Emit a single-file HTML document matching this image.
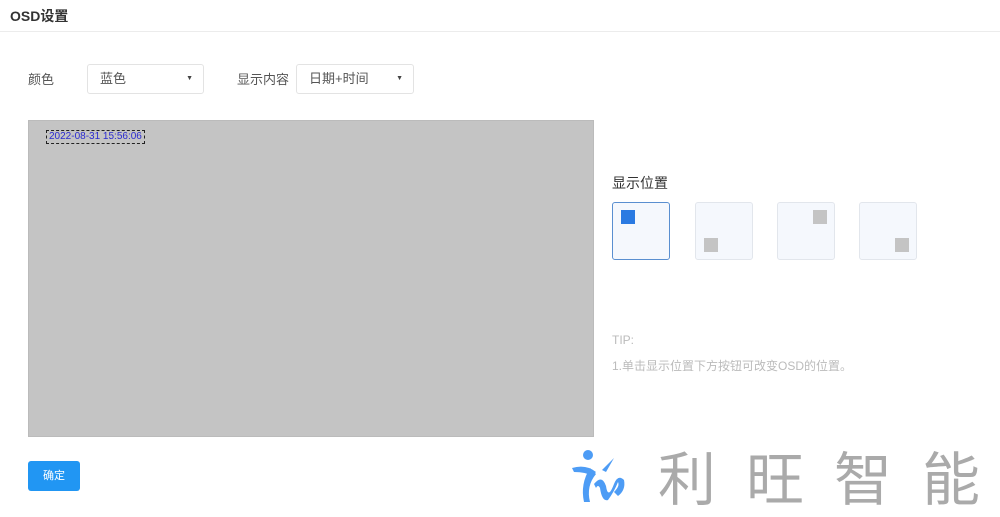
<!DOCTYPE html><html><head><meta charset="utf-8"><style>
body{margin:0;width:1000px;height:507px;background:#fff;font-family:"Liberation Sans","Noto Sans CJK SC",sans-serif;position:relative;overflow:hidden;color:#555}
.a{position:absolute}
.sel{position:absolute;height:30px;border:1px solid #e3e3e3;border-radius:3px;box-sizing:border-box;font-size:13px;color:#555;line-height:28px;padding-left:12px}
.sel:after{content:"▼";position:absolute;right:10px;top:0;font-size:7px;color:#444}
.box{position:absolute;top:202px;width:58px;height:58px;box-sizing:border-box;border:1px solid #e2e6ec;border-radius:3px;background:#f5f8fd}
.box i{position:absolute;width:14px;height:14px;background:#c4c4c4}
</style></head><body>
<div class="a" style="left:10px;top:6px;font-size:14px;font-weight:bold;color:#333">OSD设置</div>
<div class="a" style="left:0;top:31px;width:1000px;height:1px;background:#ececec"></div>
<div class="a" style="left:28px;top:69px;font-size:13px">颜色</div>
<div class="sel" style="left:87px;top:64px;width:117px">蓝色</div>
<div class="a" style="left:237px;top:69px;font-size:13px">显示内容</div>
<div class="sel" style="left:296px;top:64px;width:118px">日期+时间</div>
<div class="a" style="left:28px;top:120px;width:566px;height:317px;background:#c4c4c4;border:1px solid #bbb;box-sizing:border-box"></div>
<div class="a" style="left:46px;top:130px;border:1px dashed #222;font-size:10px;color:#2a2ad0;padding:0 2px;line-height:12px">2022-08-31 15:56:06</div>
<div class="a" style="left:612px;top:173px;font-size:14px;color:#333">显示位置</div>
<div class="box" style="left:612px;border-color:#5a8fd0"><i style="left:8px;top:7px;background:#2a7ae2"></i></div>
<div class="box" style="left:695px"><i style="left:8px;top:35px"></i></div>
<div class="box" style="left:777px"><i style="left:35px;top:7px"></i></div>
<div class="box" style="left:859px"><i style="left:35px;top:35px"></i></div>
<div class="a" style="left:612px;top:333px;font-size:12px;color:#bbb">TIP:</div>
<div class="a" style="left:612px;top:357px;font-size:12px;color:#bbb">1.单击显示位置下方按钮可改变OSD的位置。</div>
<div class="a" style="left:28px;top:461px;width:52px;height:30px;background:#2196f3;border-radius:3px;color:#fff;font-size:11px;text-align:center;line-height:30px">确定</div>
<svg class="a" style="left:568px;top:446px" width="62" height="60" viewBox="0 0 62 60">
<circle cx="20" cy="9" r="5" fill="#4d9cf5"/>
<path d="M4 22 Q18 18 28 26 L24 30 Q18 26 6 26Z" fill="#4d9cf5"/>
<path d="M22 22 Q12 38 16 56 L22 56 Q18 40 28 28Z" fill="#4d9cf5"/>
<path d="M26 38 Q34 28 38 40 Q40 54 46 38 Q50 28 56 34 Q58 44 50 50 L46 46 Q52 40 50 36 Q46 46 40 54 Q34 56 32 42 Q30 38 28 42Z" fill="#4d9cf5"/>
<path d="M34 24 L46 12 L38 26Z" fill="#4d9cf5"/>
</svg>
<div class="a" style="left:658px;top:440px;font-size:58px;color:#aaa;letter-spacing:30px;line-height:70px;white-space:nowrap;font-family:'Noto Sans CJK SC',sans-serif">利旺智能</div>
</body></html>
